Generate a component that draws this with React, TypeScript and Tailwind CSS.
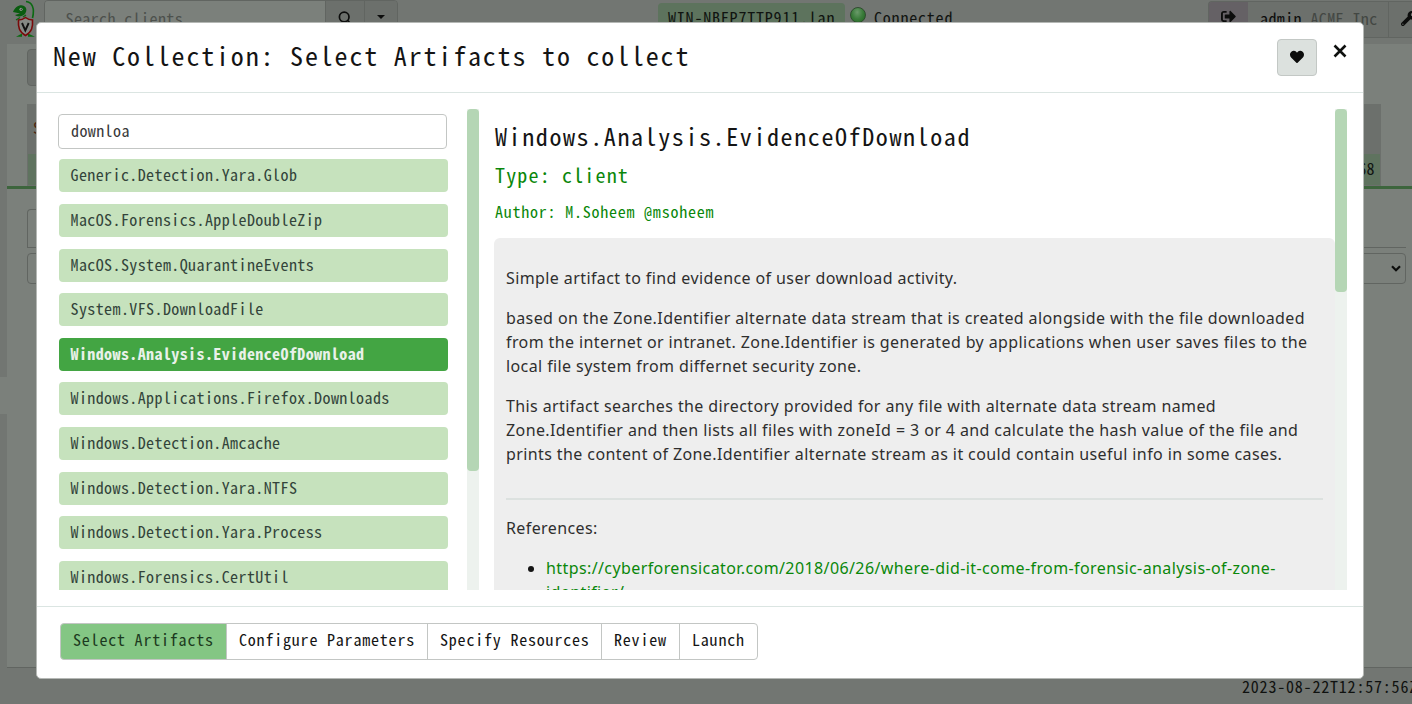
import React from "react";
import clsx from "clsx";
import { FaHeart, FaSignOutAlt, FaWrench } from "react-icons/fa";

const artifacts = [
  "Generic.Detection.Yara.Glob",
  "MacOS.Forensics.AppleDoubleZip",
  "MacOS.System.QuarantineEvents",
  "System.VFS.DownloadFile",
  "Windows.Analysis.EvidenceOfDownload",
  "Windows.Applications.Firefox.Downloads",
  "Windows.Detection.Amcache",
  "Windows.Detection.Yara.NTFS",
  "Windows.Detection.Yara.Process",
  "Windows.Forensics.CertUtil",
];
const selected = "Windows.Analysis.EvidenceOfDownload";

const steps = [
  "Select Artifacts",
  "Configure Parameters",
  "Specify Resources",
  "Review",
  "Launch",
];

function Logo() {
  return (
    <svg viewBox="0 0 24 38" className="h-[38px] w-6 shrink-0">
      <path d="M14 1.500 C20 2 23 8 20.500 18" fill="none" stroke="#0b6a12" strokeWidth="1.600" />
      <path d="M1 12 C3 7 8 4 12 6 C15 7.500 15 11 13 14 C10 17 5 17 3 15 L8 13.500 Z" fill="#0a5c10" />
      <path d="M4 20 L8 17.500 M11 17 L14 15" stroke="#0b6a12" strokeWidth="1.400" />
      <circle cx="9" cy="9.300" r="1.500" fill="#a5aaa5" />
      <circle cx="9.200" cy="9.300" r="0.700" fill="#111111" />
      <path d="M4 36.800 L10 33.500 L10 36.800 Z M16 33.500 L23 36.800 L16 36.800 Z" fill="#0b6a12" />
      <path
        d="M13.500 17.500 C11 19.500 9 20 6.500 20 C6 27 7 32 13.500 35.500 C20 32 21 27 20.500 20 C18 20 16 19.500 13.500 17.500 Z"
        fill="#858985"
        stroke="#7a0a0a"
        strokeWidth="1.600"
      />
      <path d="M10 23 L13.300 30.500 L16.700 23" fill="none" stroke="#111111" strokeWidth="1.900" />
    </svg>
  );
}

function TopBar() {
  return (
    <header className="flex h-11 shrink-0 items-start bg-[#727672] leading-5">
      <div className="flex w-11 pl-3">
        <Logo />
      </div>
      <div className="flex h-[38px] w-[354px] overflow-hidden rounded-[4px] border border-[#616561]">
        <div className="w-[280px] bg-[#7b807b] pt-[7px] pl-[20.5px] text-[#4d514d]">Search clients</div>
        <div className="flex w-[39px] justify-center border-l border-[#616561] bg-[#6c706c] pt-[10px]">
          <svg viewBox="0 0 14 14" className="h-[14px] w-[14px]" fill="none" stroke="#0c0d0c" strokeWidth="1.700">
            <circle cx="6.200" cy="6" r="4.800" />
            <path d="M9.700 9.500 L13 13" />
          </svg>
        </div>
        <div className="flex flex-1 justify-center border-l border-[#616561] bg-[#6c706c] pt-[14px]">
          <svg viewBox="0 0 8 4" className="h-1 w-2" fill="#0c0d0c">
            <path d="M0 0 H8 L4 4 Z" />
          </svg>
        </div>
      </div>
      <div className="ml-[260px] mt-[3px] h-[34px] w-[187px] rounded-[4px] bg-[#5d735d] pt-1 pl-[10px] tracking-[0.8px] text-[#101310]">
        WIN-NBFP7TTP911.lan
      </div>
      <div className="mt-[7px] ml-[5px] h-4 w-4 rounded-full border border-[#2f4d2f] bg-radial-[at_45%_30%] from-[#6a9a6a] via-[#3b7c3b] to-[#1e651e]" />
      <div className="mt-[7px] ml-2 flex-1 tracking-[0.8px] text-[#111411]">Connected</div>
      <div className="mt-px flex h-[37px] w-[204px] shrink-0 overflow-hidden rounded-l-[4px] border border-r-0 border-[#616561] bg-[#6c706c]">
        <div className="w-[39px] shrink-0 bg-[#656165] pt-[7px] pl-[12px]">
          <FaSignOutAlt className="h-[15px] w-[15px] text-[#0c0d0c]" />
        </div>
        <div className="w-[140px] shrink-0 pt-[6px] pl-3 text-[#0c0d0c]">
          admin <span className="text-[#434743]">ACME Inc</span>
        </div>
        <div className="w-[40px] shrink-0 border-l border-[#616561] pt-[9px] pl-3">
          <FaWrench className="h-[15px] w-[15px] text-[#0c0d0c]" />
        </div>
      </div>
    </header>
  );
}

function Backdrop() {
  return (
    <div className="flex h-[704px] w-[1412px] flex-col bg-[#727672]">
      <TopBar />
      <div className="flex h-[624px] shrink-0">
        <div className="flex w-[7px] flex-col">
          <div className="h-[333px]" />
          <div className="h-[37px] bg-[#7b807b]" />
        </div>
        <div className="flex-1 border-b border-[#616561] bg-[#7b807b]">
          <div className="ml-5 mt-[5px] h-[37px] w-[60px] rounded-[4px] border border-[#616561] bg-[#6c706c]" />
          <div className="ml-5 mt-[18px] flex h-[82px] w-[1354px] flex-col bg-[#6c706c]">
            <div className="h-[50px] pt-[13px] pl-[6px] leading-5 text-[#4a2510]">State</div>
            <div className="mx-px h-[31px] bg-[#5f735f] pt-1 pr-[5px] text-right leading-5 text-[#101310]">68</div>
          </div>
          <div className="h-[3px] bg-[#3d653d]" />
          <div className="ml-5 mt-5 flex h-[39px] w-[1379px] border-b border-[#616561]">
            <div className="w-[100px] rounded-t-[4px] border border-b-0 border-[#616561]" />
          </div>
          <div className="ml-5 mt-[5px] flex h-[31px] w-[1379px] items-center justify-end rounded-[4px] border border-[#616561] pr-1">
            <svg viewBox="0 0 10 7" className="h-[7px] w-[10px]" fill="none" stroke="#0c0d0c" strokeWidth="2.200">
              <path d="M1 1.200 L5 5.200 L9 1.200" />
            </svg>
          </div>
        </div>
      </div>
      <footer className="flex justify-end pt-2 leading-5 tracking-[0.8px] text-[#0f110f]">
        <span className="w-[170px] whitespace-nowrap">2023-08-22T12:57:56Z</span>
      </footer>
    </div>
  );
}

function ArtifactList() {
  return (
    <div className="flex h-[481px] w-[430px] overflow-hidden">
      <div className="flex w-[418px] flex-col">
        <div className="mt-[5px] ml-[9px] flex h-[35px] w-[389px] shrink-0 items-start rounded-[4px] border border-[#c3c6c4] pt-[5px] pl-[12px] leading-5 text-[#3a3a3a]">
          downloa
        </div>
        <div className="mt-[10.3px] ml-[10px] flex w-[389px] flex-col gap-[11.625px]">
          {artifacts.map((name) => (
            <div
              key={name}
              className={clsx(
                "h-[33px] shrink-0 rounded-[4px] pt-[5px] pl-[11.5px] leading-5",
                name === selected ? "bg-[#43a543] font-bold text-[#e9f1e9]" : "bg-[#c6e2bd] text-[#33443a]",
              )}
            >
              {name}
            </div>
          ))}
        </div>
      </div>
      <div className="w-3 bg-[#edf2ee]">
        <div className="h-[362px] rounded-[4px] bg-[#b5d6b5]" />
      </div>
    </div>
  );
}

function Details() {
  return (
    <div className="flex h-[481px] w-[868px] overflow-hidden">
      <div className="flex w-[856px] flex-col pl-[15px]">
        <h2 className="mt-3 ml-px text-[24px] leading-[30px] tracking-[1.6px] text-[#141414]">
          Windows.Analysis.EvidenceOfDownload
        </h2>
        <h3 className="mt-[11px] ml-px text-[20px] leading-[26px] tracking-[1.17px] text-[#0a870a]">Type: client</h3>
        <h4 className="mt-[13px] ml-px text-[16px] leading-5 tracking-[0.77px] text-[#0a870a]">
          Author: M.Soheem @msoheem
        </h4>
        <div className="mt-[17px] shrink-0 rounded-[6px] bg-[#eeeeee] px-3 pt-7 font-['Noto_Sans','Open_Sans',sans-serif] leading-6 whitespace-nowrap text-[#2e2e2e]">
          <p>Simple artifact to find evidence of user download activity.</p>
          <p className="mt-4">
            based on the Zone.Identifier alternate data stream that is created alongside with the file downloaded
            <br />
            from the internet or intranet. Zone.Identifier is generated by applications when user saves files to the
            <br />
            local file system from differnet security zone.
          </p>
          <p className="mt-4">
            This artifact searches the directory provided for any file with alternate data stream named
            <br />
            Zone.Identifier and then lists all files with zoneId = 3 or 4 and calculate the hash value of the file and
            <br />
            prints the content of Zone.Identifier alternate stream as it could contain useful info in some cases.
          </p>
          <hr className="mt-8 w-[817px] border-t-2 border-[#dce1df]" />
          <p className="mt-4">References:</p>
          <ul className="mt-4 list-disc pl-10 marker:text-[#141414]">
            <li>
              <a className="text-[#0a870a]">
                https://cyberforensicator.com/2018/06/26/where-did-it-come-from-forensic-analysis-of-zone-
                <br />
                identifier/
              </a>
            </li>
          </ul>
        </div>
      </div>
      <div className="w-3 bg-[#edf2ee]">
        <div className="h-[183px] rounded-[4px] bg-[#b5d6b5]" />
      </div>
    </div>
  );
}

function Modal() {
  return (
    <div className="absolute top-[22px] left-9 flex h-[657px] w-[1328px] flex-col overflow-hidden rounded-[5px] border border-[#b5b8b5] bg-white">
      <div className="flex h-[70px] shrink-0 border-b border-[#dbe5e2]">
        <h1 className="flex-1 pt-4 pl-4 text-[26px] leading-8 tracking-[1.82px] text-[#141414]">
          New Collection: Select Artifacts to collect
        </h1>
        <button className="mt-4 flex h-[37px] w-10 items-center justify-center rounded-[4px] border border-[#c3c8c5] bg-[#dce1de]">
          <FaHeart className="-mt-px h-[14px] w-[14px] text-[#0c0d0c]" />
        </button>
        <button className="mt-[21px] mr-4 ml-4 h-[14px] w-[14px]">
          <svg viewBox="0 0 14 14" className="h-[14px] w-[14px]" stroke="#0f110f" strokeWidth="2.600">
            <path d="M1.500 1.500 L12.500 12.500 M12.500 1.500 L1.500 12.500" />
          </svg>
        </button>
      </div>
      <div className="flex h-[513px] shrink-0 px-3 pt-4">
        <ArtifactList />
        <Details />
      </div>
      <div className="flex flex-1 items-start border-t border-[#dbe5e2] pt-4 pl-[23px] leading-5 tracking-[0.8px]">
        {steps.map((label, i) => (
          <div
            key={label}
            className={clsx(
              "h-[37px] border border-[#c3c6c4] pt-[5px] pl-3",
              i === 0 && "w-[167px] rounded-l-[4px] bg-[#84c684] text-[#1c3a20]",
              i === 1 && "-ml-px w-[202px] text-[#141414]",
              i === 2 && "-ml-px w-[175px] text-[#141414]",
              i === 3 && "-ml-px w-[79px] text-[#141414]",
              i === 4 && "-ml-px w-[79px] rounded-r-[4px] text-[#141414]",
            )}
          >
            {label}
          </div>
        ))}
      </div>
    </div>
  );
}

export default function App() {
  return (
    <div className="relative h-[704px] w-[1412px] overflow-hidden font-['Noto_Sans_Mono_CJK_SC','Liberation_Mono',monospace] text-[16px] tracking-[0.4px]">
      <Backdrop />
      <Modal />
    </div>
  );
}
